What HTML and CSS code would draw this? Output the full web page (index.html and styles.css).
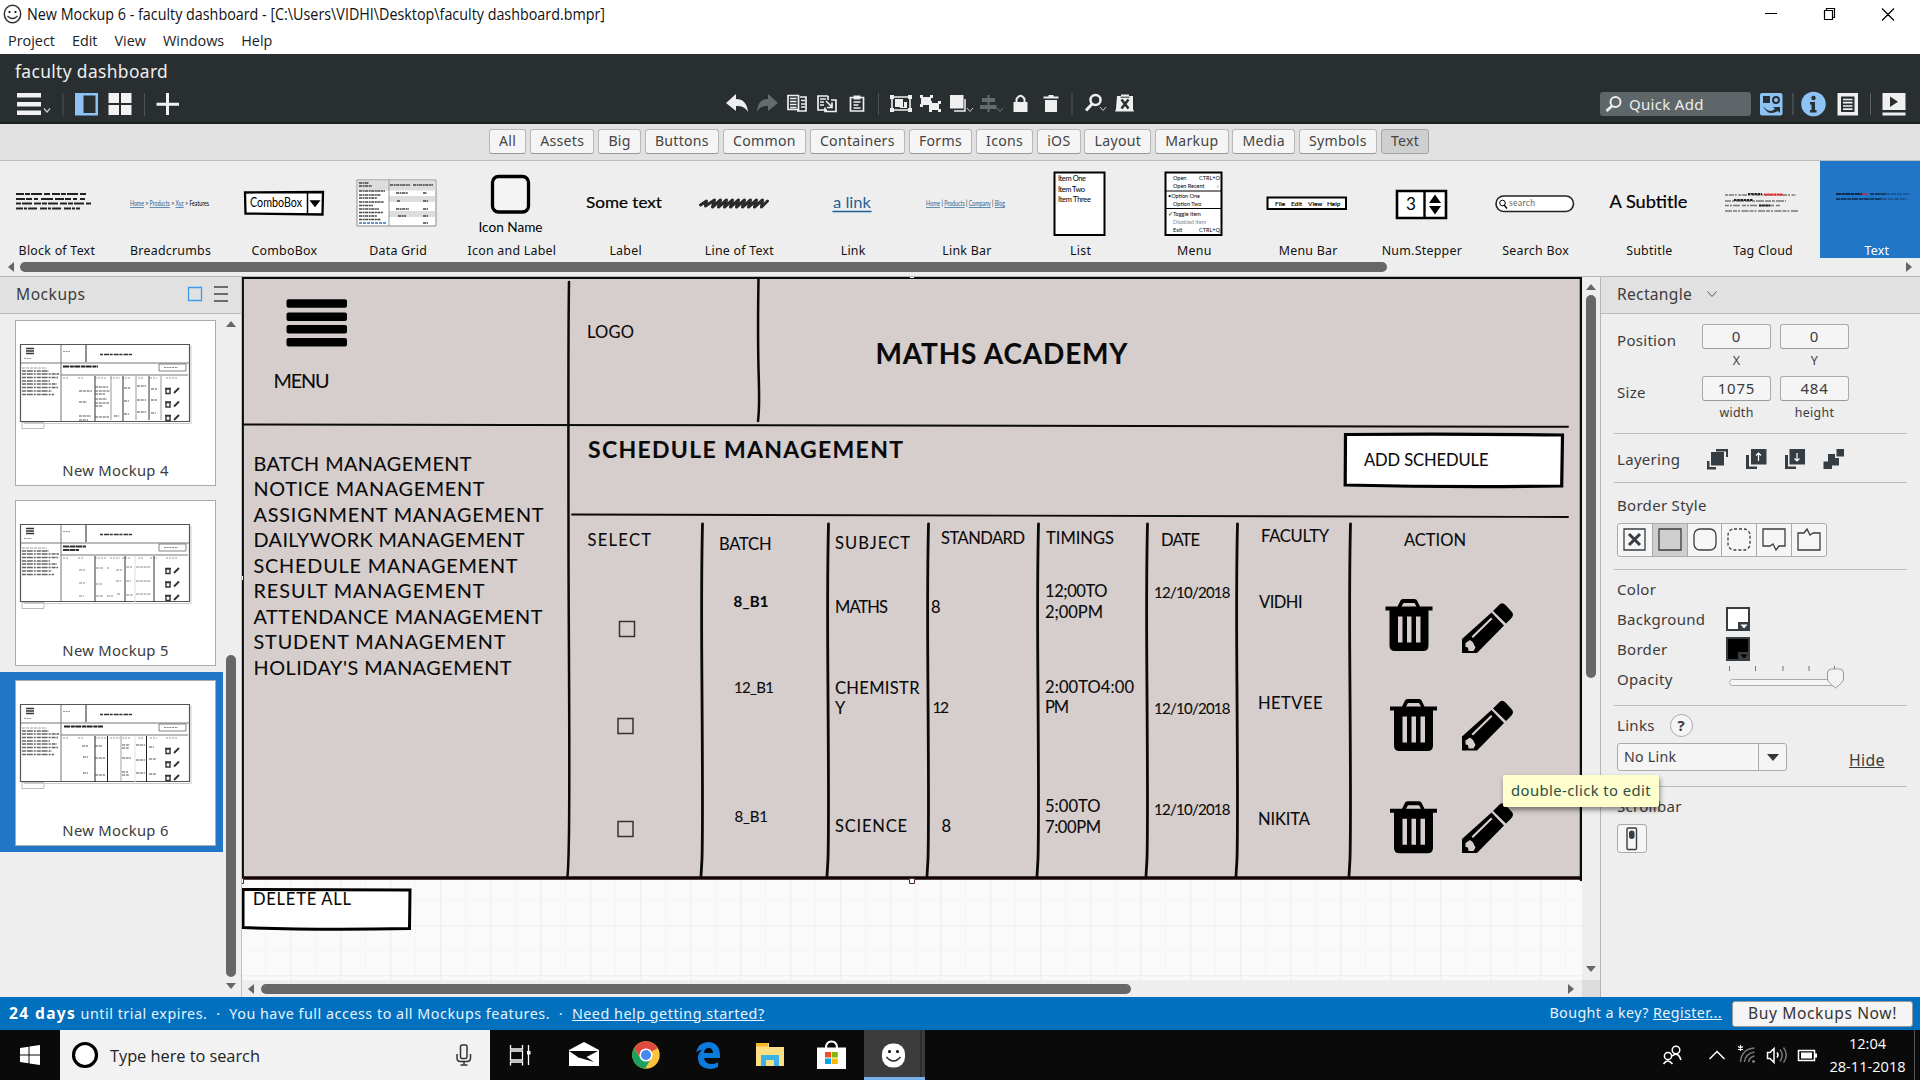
FILE: index.html
```html
<!DOCTYPE html>
<html lang="en">
<head>
<meta charset="utf-8">
<title>New Mockup 6 - faculty dashboard</title>
<link rel="stylesheet" href="styles.css">
</head>
<body>
<div class="app">
  <header class="titlebar">
    <svg class="smile" width="19" height="20" viewBox="0 0 19 20"><ellipse cx="9.5" cy="10" rx="8.2" ry="8.7" fill="#fff" stroke="#333" stroke-width="1.5"/><circle cx="6.5" cy="8" r="1.1"/><circle cx="12.5" cy="8" r="1.1"/><path d="M4.5 12q5 5 10 0" fill="none" stroke="#333" stroke-width="1.3"/></svg>
    <svg class="fill-text" width="900" height="28"><text x="0" y="19.5" textLength="578" lengthAdjust="spacingAndGlyphs">New Mockup 6 - faculty dashboard - [C:\Users\VIDHI\Desktop\faculty dashboard.bmpr]</text></svg>
    <svg class="winctl" width="150" height="28" viewBox="0 0 150 28" fill="none" stroke="#000" stroke-width="1.2"><path d="M5 13.5h12M64.5 10.5h8v9h-8zM66.500 10.500v-2h8v9h-2M122 8.500l12 12M134 8.500l-12 12"/></svg>
  </header>
  <nav class="menubar"><span>Project</span><span>Edit</span><span>View</span><span>Windows</span><span>Help</span></nav>

  <section class="darkbar">
    <div class="docname">faculty dashboard</div>
    <div class="tools">
      <svg width="200" height="28" viewBox="0 90 200 28">
        <g fill="#f2f2f2"><path d="M17 93h24v4.500H17zM17 102h24v4.500H17zM17 110.500h24v4.500H17z"/><path d="M108.500 93h10.500v10h-10.500zM121 93h10.500v10H121zM108.500 105h10.500v10h-10.500zM121 105h10.500v10H121zM166 93h3v22h-3zM156.500 102.700h22.500v3h-22.500z"/></g>
        <path d="M44 108.500l3 3.500 3-3.500" fill="none" stroke="#ccc" stroke-width="1.2"/>
        <path d="M63 93v23M144.500 93v23" stroke="#4d5356"/>
        <path d="M75 93h23v22.500H75z" fill="#8cc3f3"/><path d="M83.500 95.500h12v17.500h-12z" fill="#292e31"/>
      </svg>
      <svg class="mid" width="420" height="28" viewBox="720 90 420 28">
        <path d="M726 103l10-9v5c7 0 11 4 12 13-3-5-6-6-12-6v5z" fill="#efefef"/>
        <path d="M778 103l-10-9v5c-7 0-10 4-11 13 3-5 5-6 11-6v5z" fill="#666b6e"/>
        <g fill="none" stroke="#efefef" stroke-width="1.700"><path d="M788 95.500h10.500v14H788zM800 97h6v14h-9M790 98.500h6.500M790 101.500h6.500M790 104.500h6.500M790 107.500h6.500M801 100.500h4M801 104h4M801 107h4"/>
        <path d="M828 96h-10v14h9M828 96v4M820 99h6M820 102h4M820 105h4M831 100h5v11.500h-11v-4M826 101l6 6M832 102.500v5h-5" />
        <path d="M850.500 97.500h13V111h-13zM853.500 102h7M853.500 105h5M853.500 108h7"/><path d="M853.500 97.500h7" stroke-width="4"/></g>
        <g fill="#292e31" stroke="#efefef" stroke-width="1.600"><path d="M892 97h18v13h-18z"/><g fill="#efefef" stroke="none"><path d="M895 99h8v8h-8zM904 102h3v6h-7v-1h4zM890 95h4v4h-4zM908 95h4v4h-4zM890 108h4v4h-4zM908 108h4v4h-4z"/><path d="M921 97h10v8h-10zM929 103h10v7h-10zM920 95h3v3h-3zM930 95h3v3h-3zM920 104h3v3h-3zM929 101h3v3h-3zM938 101h3v3h-3zM929 109h3v3h-3zM938 109h3v3h-3z"/></g></g>
        <path d="M950 95h13.500v13.500H950z" fill="#efefef"/><path d="M965 99v12h-11" fill="none" stroke="#efefef" stroke-width="1.500"/>
        <g fill="#666b6e"><path d="M982 98h13v4h-13zM980 105h16.500v4H980zM987.500 95h2v17h-2z"/></g>
        <path d="M967 108l3 3.500 3-3.500" fill="none" stroke="#ccc"/><path d="M997 108l3 3.500 3-3.500" fill="none" stroke="#777"/>
        <path d="M1013.500 102h14v10h-14z" fill="#efefef"/><path d="M1016.500 103v-4q4-6.500 8 0v4" fill="none" stroke="#efefef" stroke-width="2"/>
        <path d="M1043.500 96.500h5V95h5v1.500h5v2h-15zM1045 100h12v12h-12z" fill="#efefef"/>
        <circle cx="1095.500" cy="100" r="5" fill="none" stroke="#efefef" stroke-width="2.500"/><path d="M1092 104l-6 6.500" stroke="#efefef" stroke-width="3"/><path d="M1100 107l3 3.500 3-3.500" fill="none" stroke="#ccc"/>
        <path d="M1117 96h4v-1.500h8V96h4v13l1 2.500h-19l1-2.500z" fill="#efefef"/><path d="M1121.500 99.500l7 9M1128.500 99.500l-7 9" stroke="#292e31" stroke-width="2.500"/><path d="M1120.500 97.200h9" stroke="#292e31"/>
        <path d="M878.500 93v22M1072 93v22" stroke="#4d5356"/>
      </svg>
      <div class="quick"><svg width="18" height="18" viewBox="0 0 18 18" fill="none" stroke="#eee"><circle cx="10.500" cy="7" r="5" stroke-width="2"/><path d="M7 11l-5.500 5" stroke-width="2.800"/></svg><span>Quick Add</span></div>
      <svg width="160" height="28" viewBox="1755 90 160 28">
        <rect x="1760" y="93" width="22.500" height="22.500" rx="2" fill="#8cc3f3"/><path d="M1763 96h7v7h-7z" fill="#292e31"/><circle cx="1776" cy="100" r="3" fill="none" stroke="#292e31" stroke-width="2"/><path d="M1763 106q6 8 12 3l-2-2h7v6l-2-2q-10 6-15-5z" fill="#292e31"/>
        <circle cx="1813.500" cy="104" r="12.300" fill="#8cc3f3"/><circle cx="1813.500" cy="98" r="2.200" fill="#292e31"/><path d="M1810 102h5v8h1.500v2.500h-6.500V110h1.500v-5.500h-1.500z" fill="#292e31"/>
        <path d="M1837.500 93h20.500v22.500h-20.500z" fill="#efefef"/><path d="M1841 96.500h13.500v15.500H1841z" fill="#292e31"/><path d="M1843 99.500h9.500M1843 102.700h9.500M1843 106h9.500M1843 109.200h9.500" stroke="#efefef" stroke-width="1.700"/>
        <path d="M1882.500 93h23v17h-23zM1882.500 112.500h23v3h-23z" fill="#efefef"/><path d="M1890 96.500v10.500l8-5.200z" fill="#292e31"/>
        <path d="M1793 93v22M1870.500 93v22" stroke="#5d6366"/>
      </svg>
    </div>
  </section>

  <nav class="cats"><a>All</a><a>Assets</a><a>Big</a><a>Buttons</a><a>Common</a><a>Containers</a><a>Forms</a><a>Icons</a><a>iOS</a><a>Layout</a><a>Markup</a><a>Media</a><a>Symbols</a><a class="on">Text</a></nav>

  <section class="library">
    <div class="tiles">
      <figure><svg viewBox="0 0 113.750 80"><g stroke="#222" stroke-width="1.900"><path d="M16 33h72" stroke-dasharray="8 1 5 1 11 2 6 2"/><path d="M16 38h69" stroke-dasharray="9 1 6 2 4 3 12 2"/><path d="M16 42.500h75" stroke-dasharray="5 1 10 2 7 1"/><path d="M16 47.500h64" stroke-dasharray="7 1 3 1 9 3"/></g></svg><figcaption>Block of Text</figcaption></figure>
      <figure><svg viewBox="0 0 113.750 80"><text x="16" y="45" font-size="6.800" textLength="79" lengthAdjust="spacingAndGlyphs"><tspan class="lk">Home</tspan> &gt; <tspan class="lk">Products</tspan> &gt; <tspan class="lk">Xyz</tspan> &gt; Features</text></svg><figcaption>Breadcrumbs</figcaption></figure>
      <figure><svg viewBox="0 0 113.750 80"><path d="M17 31.500l78-.5-.5 22.500-77-1z" fill="#fff" stroke="#000" stroke-width="2.300"/><path d="M79.500 31v22M83 40h8l-4 5z" stroke="#000" stroke-width="1.500"/><text x="22" y="46" font-size="12.500" textLength="52" lengthAdjust="spacingAndGlyphs">ComboBox</text></svg><figcaption>ComboBox</figcaption></figure>
      <figure><svg viewBox="0 0 113.750 80"><path d="M16 19h79v46H16z" fill="#fff" stroke="#888"/><path d="M16.500 19.500h78v10h-78zM48 35h46v6H48zM48 50h46v6H48z" fill="#ddd"/><path d="M48 19v46" stroke="#999"/><path d="M18 22h10M18 25h13M18 30h26M18 34h22M18 37h18M18 41h25M18 44.500h14M18 48h20M18 51.500h24M18 55h18M18 58.500h22M49 24h20M72 24h20M55 32h12M82 32h4M56 40h3M82 40h5M55 48h13M82 48h5M57 55h8M82 55h5M82 62h5" stroke="#444" stroke-width="1.500" stroke-dasharray="3 .6 2 .5"/><path d="M18 62h27" stroke="#2a72b5" stroke-width="1.500" stroke-dasharray="3 1"/></svg><figcaption>Data Grid</figcaption></figure>
      <figure><svg viewBox="0 0 113.750 80"><rect x="37.500" y="15.500" width="36" height="35.500" rx="6" fill="#f4f4f4" stroke="#000" stroke-width="3.300"/><text x="23.500" y="71" font-size="13" textLength="64" lengthAdjust="spacingAndGlyphs">Icon Name</text></svg><figcaption>Icon and Label</figcaption></figure>
      <figure><svg viewBox="0 0 113.750 80"><text x="17" y="46.500" font-size="15.500" textLength="76" lengthAdjust="spacingAndGlyphs" stroke="#000" stroke-width=".2">Some text</text></svg><figcaption>Label</figcaption></figure>
      <figure><svg viewBox="0 0 113.750 80"><path d="M17.500 44l6-4-1 5 9-6-2 7 8-7-2 7 8-7-2 7 8-7-2 7 8-7-2 7 8-7-2 7 8-7-2 7 8-7-2 7 8-7-1 7 6-6" fill="none" stroke="#2a2a2a" stroke-width="3" stroke-linejoin="round" stroke-linecap="round"/></svg><figcaption>Line of Text</figcaption></figure>
      <figure><svg viewBox="0 0 113.750 80"><text x="37" y="46.500" font-size="16" textLength="38" lengthAdjust="spacingAndGlyphs" fill="#1f5f99">a link</text><path d="M36.500 50.500h39" stroke="#1f5f99" stroke-width="1.600"/></svg><figcaption>Link</figcaption></figure>
      <figure><svg viewBox="0 0 113.750 80"><text x="16" y="45" font-size="6.800" textLength="79" lengthAdjust="spacingAndGlyphs"><tspan class="lk">Home</tspan> | <tspan class="lk">Products</tspan> | <tspan class="lk">Company</tspan> | <tspan class="lk">Blog</tspan></text></svg><figcaption>Link Bar</figcaption></figure>
      <figure><svg viewBox="0 0 113.750 80"><path d="M30.500 11.500h50V74h-50z" fill="#fff" stroke="#000" stroke-width="2"/><g font-size="7.500"><text x="34" y="20" textLength="28">Item One</text><text x="34" y="30.500" textLength="27">Item Two</text><text x="34" y="41" textLength="33">Item Three</text></g></svg><figcaption>List</figcaption></figure>
      <figure><svg viewBox="0 0 113.750 80"><path d="M27.500 11.500h56V74h-56z" fill="#fff" stroke="#000" stroke-width="2"/><path d="M28 30h55M28 47.500h55" stroke="#000"/><g font-size="5.500"><text x="35" y="19">Open</text><text x="61" y="19" textLength="21">CTRL+O</text><text x="35" y="27">Open Recent</text><text x="79" y="27">›</text><text x="30" y="37">•Option One</text><text x="35" y="45">Option Two</text><text x="30" y="55">✓Toggle Item</text><text x="35" y="63" fill="#888">Disabled Item</text><text x="35" y="71">Exit</text><text x="61" y="71" textLength="21">CTRL+Q</text></g></svg><figcaption>Menu</figcaption></figure>
      <figure><svg viewBox="0 0 113.750 80"><path d="M16.500 36.500h78.500v11.500H16.500z" fill="#fff" stroke="#000" stroke-width="2"/><g font-size="6.500" stroke="#000" stroke-width=".15"><text x="24" y="44.500">File</text><text x="40" y="44.500">Edit</text><text x="57" y="44.500">View</text><text x="76" y="44.500">Help</text></g></svg><figcaption>Menu Bar</figcaption></figure>
      <figure><svg viewBox="0 0 113.750 80"><path d="M32 30h49v27H32z" fill="#fff" stroke="#000" stroke-width="2.600"/><path d="M59.500 30v27" stroke="#000" stroke-width="2.400"/><path d="M64 42h12l-6-8.500zM64 45h12l-6 8.500z"/><text x="41" y="48.500" font-size="17">3</text></svg><figcaption>Num.Stepper</figcaption></figure>
      <figure><svg viewBox="0 0 113.750 80"><rect x="17" y="35" width="77.500" height="15.500" rx="7.700" fill="#fff" stroke="#222" stroke-width="1.600"/><circle cx="23.500" cy="42" r="2.800" fill="none" stroke="#000"/><path d="M25 44l3 3.500" stroke="#000" stroke-width="1.300"/><text x="30" y="45" font-size="8.500" textLength="26" fill="#666">search</text></svg><figcaption>Search Box</figcaption></figure>
      <figure><svg viewBox="0 0 113.750 80"><text x="16.500" y="46.500" font-size="17" textLength="78" lengthAdjust="spacingAndGlyphs" stroke="#000" stroke-width=".2">A Subtitle</text></svg><figcaption>Subtitle</figcaption></figure>
      <figure><svg viewBox="0 0 113.750 80"><g stroke="#777" stroke-width="1.300"><path d="M19 34h71" stroke-dasharray="3 .8 5 1 2 1.500"/><path d="M19 40h61" stroke-dasharray="6 1 3 1 8 1"/><path d="M19 44.500h56" stroke-dasharray="4 1 2 1 7 2"/><path d="M19 50h73" stroke-dasharray="7 1 4 1 2 1.500"/></g><path d="M42 33h14M28 39h19M53 44.500h11" stroke="#222" stroke-width="2" stroke-dasharray="2.500 .7"/><path d="M58 33.500h19" stroke="#e22" stroke-width="2" stroke-dasharray="2.500 .7"/></svg><figcaption>Tag Cloud</figcaption></figure>
      <figure class="sel"><svg viewBox="0 0 113.750 80"><path d="M16 33h26" stroke="#0c2745" stroke-width="1.800" stroke-dasharray="5 .7 3 .7"/><path d="M42 33h6" stroke="#b1364a" stroke-width="1.800"/><path d="M50 33h15M16 38h46" stroke="#0c2745" stroke-width="1.700" stroke-dasharray="4 .7 6 .7"/><path d="M65 33h25M62 38h25" stroke="#15508c" stroke-width="1.500" stroke-dasharray="5 1"/></svg><figcaption>Text</figcaption></figure>
    </div>
    <div class="hscroll"><i class="al"></i><b></b><i class="ar"></i></div>
  </section>

  <main class="work">
    <aside class="left">
      <div class="phead"><span>Mockups</span><svg width="44" height="18" viewBox="0 0 44 18" fill="none"><path d="M1.500 2.500h13v13h-13z" stroke="#3b9cf0" stroke-width="1.300"/><path d="M27 2h14M27 9h14M27 16h14" stroke="#444" stroke-width="1.400"/></svg></div>
      <div class="lbody">
        <div class="list">
          <div class="row"><div class="card"><svg viewBox="0 0 200 110">
            <defs><g id="base" fill="none" stroke="#333"><path d="M6 101.500h22v6H6z" fill="#fff" stroke="#aaa" stroke-width=".8"/><path d="M4.500 23.500h169v77H4.500z" fill="#fff" stroke="#555" stroke-width="1.200"/><path d="M175 25v77.500H8" stroke="#ccc"/><path d="M45 24v77M4 42h170M45 54h127" stroke="#666" stroke-width=".9"/><path d="M70 24v17" stroke="#222"/><path d="M10 27.500h8M10 30h8M10 32.500h8" stroke-width="1.500"/><path d="M8 37.500h8M47 30.500h7" stroke="#999" stroke-dasharray="2 .6"/><path d="M84 33.500h33" stroke-width="1.700" stroke-dasharray="3 1 5 .7"/><path d="M143 43h27v7h-27z" stroke="#666" stroke-width=".8"/><path d="M148 46.500h14" stroke="#888" stroke-dasharray="2 .7"/><path d="M6 47h25" stroke="#999" stroke-dasharray="3 1"/><path d="M6 50h27M6 53h37M6 56.500h36M6 60h28M6 63h35M6 66.500h36M6 70h30M6 73.500h32" stroke="#666" stroke-width="1.300" stroke-dasharray="4 .8 6 1 2 1"/><path d="M47 57h6M62 57h6M79 57h12M94 57h10M106 57h9M122 57h5M134 57h7M150 57h11" stroke="#999" stroke-dasharray="2 1"/><g id="ti"><path d="M150 68h4v4.500h-4zM149 67.500h6" stroke-width="1.400"/><path d="M158 72l5-5" stroke-width="2"/></g><use href="#ti" y="13.500"/><use href="#ti" y="27"/></g></defs>
            <use href="#base"/><g fill="none" stroke="#555"><path d="M47 45.500h35" stroke="#222" stroke-width="1.800" stroke-dasharray="6 .8 4 .5"/><path d="M79 55v45M107 55v45M133 55v44" stroke="#333"/><path d="M120 55v44M145 55v44M95 55v44" stroke="#999"/><path d="M63 70h13M79 66h13M79 70h15M79 73h10M79 78h12M79 82h14M79 85h8M63 95h12M63 99h9M79 96h14M98 95h5M63 81h8M108 67h6M108 80h5M108 93h5M121 65h9M121 79h9M121 91h9M135 68h6M135 79h6M135 92h5" stroke-dasharray="3 .8"/></g></svg><span>New Mockup 4</span></div></div>
          <div class="row"><div class="card"><svg viewBox="0 0 200 110"><use href="#base"/><g fill="none" stroke="#333"><path d="M47 45.500h23M47 49h16" stroke-width="2.200" stroke-dasharray="6 .5"/><path d="M79 55v46M109 55v46M138 55v46"/><path d="M119 55v46" stroke="#ddd"/><path d="M63 69h6M80 67h7M91 67h2M100 69h6M63 82h6M80 83h6M100 80h5M63 95h5M80 95h7M91 95h6M101 93h3M110 66h6M120 66h14M110 80h5M120 80h15M110 94h7M120 93h15" stroke="#888" stroke-dasharray="3 .8"/></g></svg><span>New Mockup 5</span></div></div>
          <div class="row on"><div class="card"><svg viewBox="0 0 200 110"><use href="#base"/><g fill="none" stroke="#555"><path d="M48 45.500h39" stroke="#222" stroke-width="1.800" stroke-dasharray="6 .8 4 .5"/><path d="M79 55v46M91.500 55v46M130.500 55v46" stroke="#222"/><path d="M105 55v46" stroke="#777" stroke-width=".7"/><path d="M119 55v46" stroke="#e2e2e2"/><path d="M66 65h6M79 65h7M106 64h8M106 67h7M67 76h5M79 77h10M106 77h9M67 92h5M79 94h10M106 91h6M106 94h7M120 64h9M120 79h9M120 92h9M133 66h5M133 78h7M133 93h7" stroke-dasharray="3 .8"/></g></svg><span>New Mockup 6</span></div></div>
        </div>
        <div class="vscroll"><i class="au"></i><b></b><i class="ad"></i></div>
      </div>
    </aside>

    <section class="center">
      <div class="canvasrow">
        <svg class="canvas" viewBox="242 277 1340 703" width="1340" height="703">
          <defs>
            <pattern id="grid" width="50" height="50" x="590" y="925" patternUnits="userSpaceOnUse"><path d="M25.500 0v50M0 25.500h50" stroke="#f5f5f5"/><path d="M0 .5h50M.5 0v50" stroke="#f0f0f0" stroke-width="2"/></pattern>
            <g id="trash"><path d="M0 11v-4h12l3-6q.5-1.500 2.500-1.500h11.500q2 0 2.500 1.500l3 6H47v4h-4v35q0 5.500-5.500 5.500h-28Q4 51.500 4 46V11zM16 7h15l-2-3.500H18zM12.500 17v26h4.500V17zM21.500 17v26h4.500V17zM30.500 17v26h4.500V17z" fill-rule="evenodd"/></g>
            <g id="pencil"><path d="M31 9l6-6q3-3.500 6.500 0l6 6.500q3 3 0 6.500L44 21.500zM29.500 10.500L42 23.500 15 51H0V37zM3.500 41v4l2.500.5.500 3.500h5l2-3.500-2.500-5-3-2.500zM9.500 34.500l1.500 1.500L30.500 17l-1.500-1.500z" fill-rule="evenodd"/></g>
          </defs>
          <path d="M242 277h1340v703H242z" fill="#fafafa"/><path d="M242 277h1340v703H242z" fill="url(#grid)"/>
          <path d="M242 277h1340v602H242z" fill="#d6cecc"/>
          <g fill="none" stroke="#0a0a0a" stroke-linecap="round">
            <path d="M243 277.800h1338.500" stroke-width="2.200"/><path d="M242.800 278v600" stroke-width="2.200"/><path d="M1581 278v602" stroke-width="2.500"/><path d="M242 878h1340" stroke="#140504" stroke-width="3.600"/>
            <path d="M569 282c-1 60-.5 180-.5 260s1.500 210 .5 290q-.5 35-1.500 44" stroke-width="2.500"/>
            <path d="M758.500 279q-1 60 .3 100 .8 30-.8 42" stroke-width="2.500"/>
            <path d="M243 424.500q700 0 1325 2.200" stroke-width="2"/><path d="M572 514.500q500 1 996 2.500" stroke-width="1.900"/>
            <g stroke-width="2.800"><path id="col" d="M702.500 524c-1.500 60-.8 120-.5 170s1 130 0 165l-1 17"/><use href="#col" x="126"/><use href="#col" x="226"/><use href="#col" x="336"/><use href="#col" x="445"/><use href="#col" x="535"/><use href="#col" x="648"/></g>
          </g>
          <path d="M1345.500 434.500q110-1 217 .5l-.8 51q-110 1.500-216.500-1z" fill="#fff" stroke="#000" stroke-width="3.200"/>
          <path d="M243 889.500l167 .5-.5 38.500q-90 2-166.500-1z" fill="#fff" stroke="#000" stroke-width="3"/>
          <g fill="#000"><rect x="286.500" y="299.200" width="60.500" height="8.600" rx="2"/><rect x="286.500" y="312.400" width="60.500" height="8.600" rx="2"/><rect x="286.500" y="325" width="60.500" height="8.600" rx="2"/><rect x="286.500" y="337.900" width="60.500" height="8.600" rx="2"/></g>
          <g class="ink">
            <g font-size="19.800">
            <text x="273.500" y="388" textLength="56">MENU</text>
            <text x="253.500" y="471" textLength="218">BATCH MANAGEMENT</text><text x="253.500" y="496" textLength="231">NOTICE MANAGEMENT</text><text x="253.500" y="522" textLength="290">ASSIGNMENT MANAGEMENT</text><text x="253.500" y="547" textLength="271">DAILYWORK MANAGEMENT</text><text x="253.500" y="572.500" textLength="264">SCHEDULE MANAGEMENT</text><text x="253.500" y="598" textLength="231">RESULT MANAGEMENT</text><text x="253.500" y="623.500" textLength="289">ATTENDANCE MANAGEMENT</text><text x="253.500" y="649" textLength="252">STUDENT MANAGEMENT</text><text x="253.500" y="674.500" textLength="258">HOLIDAY'S MANAGEMENT</text></g>
            <text x="875.500" y="364" font-size="28" textLength="252" class="b">MATHS ACADEMY</text>
            <text x="588" y="457.500" font-size="23" textLength="315" class="b">SCHEDULE MANAGEMENT</text>
            <g font-size="16.500">
            <text x="587" y="337.500" textLength="47">LOGO</text><text x="1364" y="466" textLength="124.500">ADD SCHEDULE</text><text x="253" y="905" textLength="98">DELETE ALL</text>
            <text x="587.500" y="546" textLength="63.500">SELECT</text><text x="719" y="549.500" textLength="52.500">BATCH</text><text x="835" y="548.500" textLength="75">SUBJECT</text><text x="941" y="544" textLength="84">STANDARD</text><text x="1046" y="544" textLength="68">TIMINGS</text><text x="1161" y="546" textLength="39">DATE</text><text x="1261" y="541.500" textLength="68">FACULTY</text><text x="1404" y="546" textLength="62">ACTION</text>
            <text x="835" y="612.500" textLength="53">MATHS</text><text x="931" y="612.500" textLength="9.500">8</text><text x="1045" y="597.300" textLength="62.500">12;00TO</text><text x="1045" y="617.700" textLength="58">2;00PM</text><text x="1259" y="607.500" textLength="43.500">VIDHI</text>
            <text x="835" y="693.700" textLength="84.500">CHEMISTR</text><text x="835" y="713.700" textLength="11">Y</text><text x="932.500" y="712.500" textLength="16.500" font-size="15.500">12</text><text x="1045" y="692.500" textLength="89">2:00TO4:00</text><text x="1045" y="713" textLength="24">PM</text><text x="1258" y="708.500" textLength="64.500">HETVEE</text>
            <text x="835" y="832.300" textLength="72">SCIENCE</text><text x="941.500" y="831.500" textLength="9">8</text><text x="1045" y="812" textLength="55.500">5:00TO</text><text x="1045" y="832.500" textLength="56">7:00PM</text><text x="1258" y="825" textLength="52">NIKITA</text></g>
            <g font-size="15"><text x="733.500" y="607" textLength="35" class="b">8_B1</text><text x="734" y="692.500" textLength="40">12_B1</text><text x="734.500" y="822.300" textLength="33.500">8_B1</text><text x="1154" y="597.500" textLength="76.500">12/10/2018</text><text x="1154" y="713.500" textLength="76.500">12/10/2018</text><text x="1154" y="815" textLength="76.500">12/10/2018</text></g>
          </g>
          <g fill="none" stroke="#333" stroke-width="1.500"><path d="M619.500 621.500h15v15h-15zM618 718.500h15v15h-15zM618 821.500h15v15h-15z"/></g>
          <use href="#trash" x="1385.500" y="599.500"/><use href="#trash" x="1390" y="699.500"/><use href="#trash" x="1390" y="801.700"/>
          <use href="#pencil" x="1462" y="602"/><use href="#pencil" x="1462" y="699.500"/><use href="#pencil" x="1462" y="802"/>
          <g fill="#fff" stroke="#4a2a24"><path d="M909.500 878.500h5v5h-5zM239.500 878.500h4v5h-4z"/><path d="M910 276h4v2h-4zM241 576h2v4h-2z" stroke="none"/></g>
        </svg>
        <div class="vscroll v2"><i class="au"></i><b></b><i class="ad"></i></div>
      </div>
      <div class="hscroll h2"><i class="al"></i><b></b><i class="ar"></i><em></em></div>
    </section>

    <aside class="right">
      <div class="phead"><span>Rectangle</span><svg width="12" height="8" viewBox="0 0 12 8"><path d="M1.500 1.500l4.500 5 4.500-5" fill="none" stroke="#555"/></svg></div>
      <div class="sec geo">
        <span class="lab">Position</span><div><div class="inp">0</div><small>X</small></div><div><div class="inp">0</div><small>Y</small></div>
        <span class="lab">Size</span><div><div class="inp">1075</div><small>width</small></div><div><div class="inp">484</div><small>height</small></div>
      </div>
      <div class="sec layer"><span>Layering</span>
        <svg width="140" height="22" viewBox="1706 448 140 22" fill="#363e43"><path d="M1711 452h13v13.500h-13zM1716 449h12v8h-2v-5.500h-10zM1707 461h2.500v6h6.500v2.500h-9zM1751 449h15.500v15.500H1751zM1746 455h3v11.500h8v2.500h-11zM1789.500 449h15.500v15.500h-15.500zM1785 455h3v11.500h8v2.500h-11zM1836.500 449h7.500v7.500h-7.500zM1828 454h7v4h4v7.500h-7.500v-4H1828zM1823.500 461.500h8.500v7.500h-8.500z"/><path d="M1758.500 461v-8M1756 455.500l2.500-2.500 2.500 2.500M1797 453v8M1794.500 458.500l2.500 2.500 2.500-2.500" fill="none" stroke="#fff" stroke-width="1.200"/></svg></div>
      <div class="sec bstyle"><span>Border Style</span>
        <div class="grp"><i><svg viewBox="0 0 24 24"><path d="M1 1h21v21H1z"/><path d="M6 6l11 11M17 6L6 17" stroke-width="3"/></svg></i><i class="on"><svg viewBox="0 0 24 24"><path d="M1 1h22v21H1z"/></svg></i><i><svg viewBox="0 0 24 24"><rect x="1" y="1" width="22" height="21" rx="6"/></svg></i><i><svg viewBox="0 0 24 24"><rect x="1" y="1" width="22" height="21" rx="6" stroke-dasharray="3 2"/></svg></i><i><svg viewBox="0 0 24 24"><path d="M1 1h22v17h-6l-3 4-3-6-3 2H1z"/></svg></i><i><svg viewBox="0 0 24 24"><path d="M1 5h6l3-4 3 6 3-2h7v17H1z"/></svg></i></div></div>
      <div class="sec color"><span>Color</span><span>Background</span><svg width="24" height="24"><path d="M1 1h22v22H1z" fill="#fff" stroke="#363e43" stroke-width="2"/><path d="M12 15h11v8H12z" fill="#363e43"/><path d="M14.500 17.500h7l-3.500 4z" fill="#fff"/></svg><span>Border</span><svg width="24" height="24"><path d="M1 1h22v22H1z" stroke="#363e43" stroke-width="2"/><path d="M12 15h11v8H12z" fill="#363e43"/><path d="M14.500 17.500h7l-3.500 4z"/></svg><span>Opacity</span>
        <svg class="slider" width="122" height="28" viewBox="1726 664 122 28"><path d="M1729.500 666v5M1755.500 666v5M1783 666v5M1809 666v5M1834.500 666v5" stroke="#777"/><rect x="1729.500" y="679.500" width="106" height="6" rx="3" fill="#f5f5f5" stroke="#aaa"/><path d="M1827.500 673q0-4 4-4h8q4 0 4 4v6q0 3-8 9-8-6-8-9z" fill="#f3f3f3" stroke="#999"/></svg></div>
      <div class="sec links"><div class="lh"><span>Links</span><b>?</b></div><div class="lrow"><div class="combo"><span>No Link</span><i></i></div><u>Hide</u></div></div>
      <div class="sec sb"><span>Scrollbar</span><div class="sbtn"><svg width="12" height="24" viewBox="0 0 12 24"><rect x="1" y="1" width="9.500" height="21.500" rx="1" fill="#f5f5f5" stroke="#363e43" stroke-width="1.400"/><rect x="3" y="3.500" width="5.500" height="8.500" rx="2.700" fill="#363e43"/></svg></div></div>
    </aside>
  </main>

  <footer class="trial"><p><b>24 days</b> until trial expires. <i>·</i> You have full access to all Mockups features. <i>·</i> <u>Need help getting started?</u></p><p class="r">Bought a key? <u>Register...</u></p><div class="buy">Buy Mockups Now!</div></footer>

  <div class="taskbar">
    <svg class="start" width="60" height="50" viewBox="0 1030 60 50"><path d="M20 1048l8.500-1.200v7.700H20zM29.500 1046.600L40 1045v9.500h-10.500zM20 1055.500h8.500v7.700L20 1062zM29.500 1055.500H40v9.500l-10.500-1.600z" fill="#fff"/></svg>
    <div class="search"><svg width="28" height="28" viewBox="0 0 28 28"><circle cx="14" cy="14" r="11.500" fill="#fff" stroke="#000" stroke-width="3.200"/></svg><span>Type here to search</span><svg width="18" height="22" viewBox="0 0 18 22" fill="none" stroke="#333" stroke-width="1.500"><rect x="5.500" y="1" width="6.500" height="13.500" rx="1.500"/><path d="M2 10v4q0 3.500 3.500 3.500h6.500q3.500 0 3.500-3.500v-4M9 17.500V21M5.500 21h7"/></svg></div>
    <svg width="436" height="50" viewBox="490 1030 436 50">
      <g fill="none" stroke="#fff" stroke-width="1.300"><path d="M510.500 1045v4h12v-4M510.500 1051h12v9h-12zM510.500 1065.500v-3.500h12v3.500M528.500 1045v20"/></g><path d="M527 1051h3.500v3.500h-3.500z" fill="#fff"/>
      <path d="M569 1050l15-8 15 8v16h-30z" fill="#fff"/><path d="M569 1051h29l-11.500 6 7.500 5-15.500-4.500z" fill="#0b0b0b"/>
      <circle cx="646" cy="1055" r="13.700" fill="#fbc33c"/><path d="M634.300 1048a13.700 13.700 0 0 1 23.600 0l-11.900 7-6 3z" fill="#de4b3e"/><path d="M634 1048a13.700 13.700 0 0 0 11 20.600l6.500-10.600-5.500-3-6 3z" fill="#1aa260"/><circle cx="646" cy="1055" r="6.600" fill="#fff"/><circle cx="646" cy="1055" r="5" fill="#4587f3"/>
      <path d="M696 1053q2-11 13-11 11 1 11 14v2h-16q1 6 8 6 4 0 6-2v5q-4 2-8 2-12-1-12-11 0-5 4-8-4 0-6 3zM704 1053h9q0-5-4.500-5-4 0-4.500 5z" fill="#0d7bdb" fill-rule="evenodd"/>
      <path d="M756 1043h13v4h15v19h-28z" fill="#fddf83"/><path d="M756 1043h12v3.500h-12z" fill="#f5b928"/><path d="M761 1055h18v11h-5v-6h-8v6h-5z" fill="#3bb3e8"/>
      <path d="M826 1048q0-6.500 5.500-6.500t5.500 6.500" fill="none" stroke="#fff" stroke-width="2"/><path d="M817 1047.500h29v21.500h-29z" fill="#fff"/><path d="M825 1052h6v5.500h-6z" fill="#f25022"/><path d="M831.800 1052h6v5.500h-6z" fill="#7fba00"/><path d="M825 1058.500h6v5.500h-6z" fill="#00a4ef"/><path d="M831.800 1058.500h6v5.500h-6z" fill="#ffb900"/>
      <path d="M864 1030h61v50h-61z" fill="#3c3c3c"/><path d="M921 1030v50" stroke="#222"/><path d="M864 1077h61v3h-61z" fill="#76b0e8"/><rect x="882" y="1043.500" width="23" height="24" rx="10.500" fill="#fff"/><circle cx="889.500" cy="1051.500" r="1.500"/><circle cx="897.500" cy="1051.500" r="1.500"/><path d="M886.500 1057q7 8 14 0" fill="none" stroke="#222" stroke-width="1.500"/>
    </svg>
    <svg class="tray" width="160" height="50" viewBox="1661 1030 160 50" fill="none" stroke="#fff" stroke-width="1.500"><circle cx="1676" cy="1050" r="3.800"/><circle cx="1668" cy="1056" r="3.600"/><path d="M1663.500 1064q4-6 9 0M1672 1056q6-5 9 4"/><path d="M1709.500 1059l7.500-7.500 7.500 7.500"/><path d="M1740.500 1045v6M1738 1046.500l5 3M1743 1046.500l-5 3" stroke-width="1.200"/><g stroke="#777"><path d="M1740.500 1062q1-13 14-14M1744.500 1062q1-8.500 10-10M1748.500 1062q1-5 6-6"/></g><circle cx="1753.500" cy="1061.500" r="1.300" fill="#999" stroke="none"/><path d="M1767.500 1052.500h2.500l4-4v14l-4-4h-2.500zM1777 1052.500q2 2.500 0 5"/><path d="M1780 1049.500q4.500 5.500 0 12M1783.500 1047.500q5.500 7.500 0 15" stroke="#777"/><path d="M1798.500 1050.500h16v10h-16z"/><path d="M1801 1052.500h11v6h-11zM1815 1053.500h2v4h-2z" fill="#fff" stroke="none"/></svg>
    <div class="clock"><span>12:04</span><span>28-11-2018</span></div>
  </div>

  <div class="tip">double-click to edit</div>
</div>
</body>
</html>
```
FILE: styles.css
```css
* { box-sizing: border-box; }
body { margin: 0; overflow: hidden; font-family: "Noto Sans", "Open Sans", sans-serif; color: #3c3c3c; }
svg { display: block; flex: none; }
.app { position: relative; width: 1920px; height: 1080px; display: flex; flex-direction: column; background: #eee; }

.titlebar { height: 28px; background: #fff; display: flex; align-items: center; padding-left: 3px; }
.fill-text { margin-left: 5px; font: 15.5px "Open Sans", sans-serif; }
.fill-text text { fill: #111; }
.winctl { margin-left: auto; margin-right: 10px; }
.menubar { height: 26px; background: #fff; display: flex; gap: 17px; padding-left: 8px; font: 14.4px/26px "Open Sans", sans-serif; color: #222; }

.darkbar { height: 70px; background: #292e31; border-bottom: 2px solid #1c1e20; color: #eee; }
.docname { height: 36px; padding-left: 15px; font-size: 17.4px; line-height: 34px; letter-spacing: .36px; }
.tools { display: flex; height: 28px; align-items: center; }
.tools .mid { margin-left: 520px; margin-right: 460px; }
.quick { width: 151px; height: 24px; margin-right: 4px; background: #5f666a; border-radius: 3px; display: flex; align-items: center; gap: 6px; padding-left: 5px; font-size: 15px; letter-spacing: .3px; }

.cats { height: 37px; background: #e1e1e1; border-bottom: 1px solid #bdbdbd; display: flex; justify-content: center; gap: 3.800px; padding-top: 5px; padding-right: 2px; }
.cats a { height: 25px; padding: 0 9.200px; border: 1px solid #b9b9b9; border-bottom-color: #999; border-radius: 3px; background: #f5f5f5; font-size: 14.1px; line-height: 22px; letter-spacing: .28px; color: #444; }
.cats .on { background: #cfcfcf; border-color: #a5a5a5; }

.library { height: 116px; background: #eee; border-bottom: 1px solid #b5b5b5; }
.tiles { display: flex; overflow: hidden; height: 97px; }
figure { margin: 0; width: 113.750px; height: 97px; flex: none; text-align: center; }
figure svg { width: 113.750px; height: 80px; margin-bottom: 1px; font-family: Lato, sans-serif; }
figcaption { font-size: 12.4px; line-height: 18px; letter-spacing: .25px; color: #111; }
figure.sel { background: #2176c8; }
figure.sel figcaption { color: #fff; }
.lk { fill: #1f5f99; text-decoration: underline; }

i.al, i.ar, i.au, i.ad { width: 0; height: 0; flex: none; border: 5px solid transparent; }
i.al { border-right: 6px solid #666; border-left: 0; }
i.ar { border-left: 6px solid #666; border-right: 0; }
i.au { border-bottom: 6px solid #666; border-top: 0; }
i.ad { border-top: 6px solid #666; border-bottom: 0; }
.hscroll { height: 18px; display: flex; align-items: center; padding: 0 8px; }
.hscroll b { height: 10px; width: 1367px; margin-left: 6px; border-radius: 5px; background: #676767; }
.hscroll .ar { margin-left: auto; }
.vscroll { width: 18px; display: flex; flex-direction: column; align-items: center; }
.vscroll b { width: 10px; border-radius: 5px; background: #676767; }

.work { height: 720px; display: flex; }
.phead { height: 37px; background: #e1e1e1; border-bottom: 1px solid #b9b9b9; display: flex; align-items: center; font-size: 15.6px; }
.left { width: 242px; border-right: 1px solid #c0c0c0; }
.left .phead { padding: 0 10px 3px 16px; justify-content: space-between; letter-spacing: .5px; }
.lbody { display: flex; height: 683px; }
.list { width: 223px; margin-top: -2px; }
.row { height: 180px; padding: 8px 7px 7px 15px; }
.row.on { background: #2176c8; }
.card { width: 201px; height: 166px; background: #fff; border: 1px solid #aaa; text-align: center; font-size: 14.8px; letter-spacing: .3px; }
.card svg { width: 200px; height: 110px; margin-bottom: 29px; }
.card span { display: block; line-height: 20px; }
.left .vscroll { width: 19px; margin-left: -2px; padding-top: 7px; }
.left .vscroll b { height: 322px; margin: 328px 0 6px; }

.center { width: 1358px; }
.canvasrow { display: flex; height: 703px; }
.canvas { font-family: Lato, "DejaVu Sans", sans-serif; }
.ink { fill: #0a0a0a; stroke: #0a0a0a; stroke-width: .1px; }
.ink .b { font-weight: 700; }
.v2 { padding-top: 7px; }
.v2 b { height: 383px; margin: 5px 0 288px; }
.h2 { height: 17px; padding: 0 0 0 6px; }
.h2 b { width: 870px; margin-left: 7px; }
.h2 .ar { margin-right: 8px; }
.h2 em { width: 18px; height: 17px; background: #ddd; }

.right { width: 320px; border-left: 1px solid #b5b5b5; font-size: 15px; letter-spacing: .3px; }
.right .phead { padding: 0 0 2px 16px; gap: 14px; }
.sec { margin: 0 13px; padding-left: 3px; border-bottom: 1px solid #bbb; line-height: 20px; }
.geo { height: 120px; padding-top: 10px; display: grid; grid-template-columns: 76px 69px 69px; column-gap: 9px; grid-auto-rows: 52px; text-align: center; }
.geo .lab { text-align: left; padding-top: 6px; }
.inp { height: 25px; border: 1px solid #aaa; border-bottom-color: #999; border-radius: 3px; background: #f5f5f5; line-height: 22px; letter-spacing: .8px; }
.geo small { display: block; font-size: 12.4px; line-height: 23px; }
.layer { height: 49px; display: flex; align-items: center; gap: 26px; padding-top: 2px; }
.bstyle { height: 87px; padding-top: 12px; }
.grp { display: flex; width: 210px; height: 34px; margin-top: 8px; border: 1px solid #aaa; border-radius: 3px; background: #f6f6f6; }
.grp i { flex: 1; display: flex; align-items: center; justify-content: center; border-left: 1px solid #aaa; }
.grp i:first-child { border-left: 0; }
.grp .on { background: #cecece; }
.grp svg { width: 24px; height: 24px; fill: none; stroke: #363e43; stroke-width: 1.3; }
.color { height: 136px; padding-top: 4px; display: grid; grid-template-columns: 109px 130px; grid-auto-rows: 30px; align-items: center; }
.color span:first-child { grid-column: 1 / 3; }
.slider { margin-top: -2px; }
.links { height: 81px; padding-top: 7px; }
.lh { display: flex; align-items: center; gap: 15px; height: 24px; }
.lh b { width: 23px; height: 23px; border: 1px solid #aaa; border-radius: 50%; background: #f5f5f5; text-align: center; line-height: 21px; }
.lrow { display: flex; margin-top: 6px; }
.combo { width: 170px; height: 28px; border: 1px solid #aaa; border-radius: 3px; background: #f5f5f5; display: flex; line-height: 26px; padding-left: 6px; font-size: 14.2px; letter-spacing: .25px; }
.combo i { margin-left: auto; width: 28px; border-left: 1px solid #aaa; display: flex; align-items: center; justify-content: center; }
.combo i::after { content: ""; border: 6.500px solid transparent; border-top: 7px solid #363636; border-bottom: 0; }
.lrow u { margin: 7px 0 0 62px; font-size: 15.8px; }
.sb { border: 0; padding-top: 9px; }
.sbtn { width: 30px; height: 29px; margin-top: 8px; border: 1px solid #aaa; border-radius: 3px; background: #f5f5f5; display: flex; align-items: center; justify-content: center; }

.trial { height: 33px; background: #0070bf; color: #e8f3fb; display: flex; align-items: center; padding: 0 7px 2px 9px; font-size: 14.3px; letter-spacing: .53px; }
.trial p { margin: 0; }
.trial p i { font-style: normal; margin: 0 4.500px; }
.trial b { color: #fff; font-size: 15.6px; letter-spacing: 1.350px; }
.trial .r { margin-left: auto; margin-right: 10px; letter-spacing: .4px; }
.buy { width: 181px; height: 26px; margin-top: 2px; border: 1px solid #999; border-radius: 3px; background: #f5f5f5; color: #333; text-align: center; line-height: 23px; font-size: 15.6px; letter-spacing: .6px; }

.taskbar { height: 50px; background: #0a0a0a; display: flex; }
.search { width: 430px; background: #f2f2f2; display: flex; align-items: center; padding: 0 17px 0 11px; font: 16.4px "Open Sans", sans-serif; color: #222; }
.search span { margin-left: 11px; margin-right: auto; letter-spacing: -.05px; }
.tray { margin-left: auto; }
.clock { width: 94px; border-right: 1px solid #555; margin-right: 5px; display: flex; flex-direction: column; align-items: center; padding: 2px 0 0; color: #fff; font: 14.6px/23px "Open Sans", sans-serif; }

.tip { position: absolute; left: 1503px; top: 775px; width: 156px; height: 32px; border-radius: 2px; background: #ffffcd; box-shadow: 1px 3px 5px rgba(0,0,0,.45); color: #2c4c48; text-align: center; font-size: 14.8px; line-height: 31px; letter-spacing: .42px; }
```
